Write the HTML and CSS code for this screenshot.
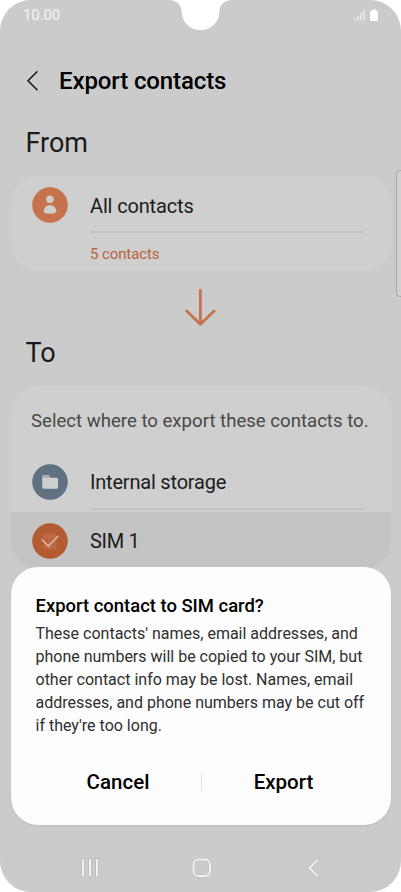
FILE: index.html
```html
<!DOCTYPE html>
<html lang="en">
<head>
<meta charset="utf-8">
<title>Export contacts</title>
<link rel="stylesheet" href="styles.css">
</head>
<body>
<div class="phone">
  <header class="status">
    <span class="time">10.00</span>
    <svg class="signals" width="26" height="14" viewBox="0 0 26 14">
      <path d="M2 10.500v2M5 8v4.500M8 4.500v8M11 2v10.500" stroke="#e9e9e9" stroke-width="1.600" fill="none"/>
      <path d="M19 2.800v-.6q0-.7.7-.7h2.600q.7 0 .7.7v.6h.6q1.400 0 1.400 1.400v7.400q0 1.400-1.400 1.400h-5.200q-1.400 0-1.400-1.400V4.200q0-1.400 1.400-1.400z" fill="#fff"/>
    </svg>
  </header>
  <svg class="notch" width="64" height="31" viewBox="0 0 64 31"><path d="M0 0C8 0 12.500 5 12.700 12a18.800 18.200 0 0 0 37.600 0C50.500 5 55 0 63 0z" fill="#fff"/></svg>
  <div class="titlebar">
    <svg width="12" height="20" viewBox="0 0 12 20"><path d="M11 .8L2 9.800l9 9" stroke="#111" stroke-width="1.500" fill="none" stroke-linecap="round" stroke-linejoin="round"/></svg>
    <h1>Export contacts</h1>
  </div>
  <h2 class="from">From</h2>
  <section class="card source">
    <div class="row">
      <svg class="icon" width="36" height="36" viewBox="0 0 36 36"><circle cx="18" cy="18" r="17.800" fill="#c5734c"/><circle cx="17.900" cy="12.300" r="3.700" fill="#d0cdca"/><path d="M11.700 24.300c0-3.800 2.700-6.100 6.300-6.100s6.300 2.300 6.300 6.100c0 1.700-2.900 2.500-6.300 2.500s-6.300-.8-6.300-2.500z" fill="#d0cdca"/></svg>
      <span class="label all">All contacts</span>
    </div>
    <div class="divider"></div>
    <div class="count"><span>5 contacts</span></div>
  </section>
  <div class="arrow">
    <svg width="32" height="38" viewBox="0 0 32 38"><path d="M16.400 2.300v34M2.700 23L16.400 36.300 30.100 23" stroke="#c5734c" stroke-width="2.800" fill="none" stroke-linecap="round" stroke-linejoin="round"/></svg>
  </div>
  <h2 class="to">To</h2>
  <section class="card target">
    <p class="hint">Select where to export these contacts to.</p>
    <div class="row storage">
      <svg class="icon" width="36" height="36" viewBox="0 0 36 36"><circle cx="18" cy="18" r="17.800" fill="#607182"/><path d="M10.200 15v-2.800q0-1.200 1.200-1.200h4.800q1 0 1.400 1l.5 1.500v3z" fill="#a4adb4"/><path d="M10.200 13.800h14.300q1.500 0 1.500 1.500v8q0 1.500-1.500 1.500H11.700q-1.500 0-1.500-1.500z" fill="#cecfcf"/></svg>
      <span class="label internal">Internal storage</span>
    </div>
    <div class="divider"></div>
    <div class="row chosen">
      <svg class="icon" width="36" height="36" viewBox="0 0 36 36"><circle cx="18" cy="18" r="17.800" fill="#b35b31"/><path d="M13 10.500h8.500l3 3V24q0 2-2 2H13q-2 0-2-2V12.500q0-2 2-2z" fill="#bf6a43"/><path d="M15 16v6M18 16v6M21 16v6" stroke="#b35b31" stroke-width="1"/><path d="M10 16.700l6.400 6.300 9.600-9.700" stroke="#dfc0af" stroke-width="1.300" fill="none" stroke-linecap="round"/></svg>
      <span class="label sim">SIM 1</span>
    </div>
  </section>
  <div class="edge"></div>
  <div class="dialog">
    <h3><span>Export contact to SIM card?</span></h3>
    <p>These contacts' names, email addresses, and<br>phone numbers will be copied to your SIM, but<br>other contact info may be lost. Names, email<br>addresses, and phone numbers may be cut off<br>if they're too long.</p>
    <div class="actions">
      <button class="cancel">Cancel</button>
      <i></i>
      <button class="export">Export</button>
    </div>
  </div>
  <nav class="nav">
    <svg width="20" height="22" viewBox="0 0 20 22"><path d="M3 2.500v16.500M10 2.500v16.500M17 2.500v16.500" stroke="#b5b5b5" stroke-width="3.600" stroke-linecap="round"/><path d="M3 2v17.500M10 2v17.500M17 2v17.500" stroke="#f2f2f2" stroke-width="2.200"/></svg>
    <svg width="22" height="22" viewBox="0 0 22 22" fill="none"><rect x="2.500" y="2.500" width="16.500" height="16.500" rx="5" stroke="#b5b5b5" stroke-width="3"/><rect x="2.500" y="2.500" width="16.500" height="16.500" rx="5" stroke="#f2f2f2" stroke-width="2"/></svg>
    <svg width="14" height="22" viewBox="0 0 14 22" fill="none" stroke-linecap="round"><path d="M11.500 3L3.500 11l8 8" stroke="#b5b5b5" stroke-width="3.200"/><path d="M11.500 3L3.500 11l8 8" stroke="#f2f2f2" stroke-width="2"/></svg>
  </nav>
</div>
</body>
</html>
```

FILE: styles.css
```css
* { box-sizing: border-box; }
body { margin: 0; background: #fff; font-family: Roboto, sans-serif; }
h1, h2, h3, p { margin: 0; font-weight: 400; white-space: nowrap; }
svg { display: block; flex: none; }
.phone {
  position: relative;
  width: 401px;
  height: 892px;
  display: flex;
  flex-direction: column;
  overflow: hidden;
  border-radius: 31px;
  background: #cbcbcb;
}
.status {
  height: 30px;
  padding: 0 22px 0 23px;
  display: flex;
  align-items: center;
  justify-content: space-between;
}
.time { font-size: 15px; line-height: 28px; letter-spacing: -0.1px; color: #f4f4f4; }
.notch { position: absolute; left: 169px; top: 0; }
.titlebar {
  height: 102px;
  padding-left: 26px;
  display: flex;
  align-items: center;
  gap: 21px;
}
h1 { font-size: 24px; font-weight: 500; line-height: 30px; letter-spacing: -0.12px; color: #000; }
h2 { padding: 1px 0 0 25.5px; height: 32px; font-size: 27px; line-height: 32px; color: #1b1b1b; }
.titlebar + .from { margin-top: -6px; }
.card {
  margin: 0 10.5px;
  border-radius: 27px;
  overflow: hidden;
  background: #cfcfcf;
  flex: none;
}
.source { margin-top: 18px; height: 95px; }
.row { padding-left: 21.5px; display: flex; align-items: center; gap: 22px; }
.source .row { height: 55px; padding-top: 3px; }
.label { font-size: 20px; line-height: 26px; color: #1b1b1b; }
.all { padding-top: 2px; letter-spacing: -0.15px; }
.divider { height: 2px; margin: 0 26px 0 79.5px; background: #c3c3c3; }
.count { padding: 1px 0 0 79.5px; font-size: 15px; line-height: 40px; letter-spacing: -0.1px; color: #b9633b; }
.arrow { height: 65px; padding: 17px 0 0 184px; }
.target { margin-top: 18px; height: 183px; }
.hint { height: 49px; padding: 20px 0 0 20.5px; font-size: 18.6px; line-height: 30px; color: #484848; }
.target .row { height: 54px; }
.target .storage { margin-top: 19px; padding-top: 2px; }
.internal { letter-spacing: -0.2px; }
.target .divider { margin-bottom: 2px; }
.target .chosen { height: 60px; padding-bottom: 2px; background: #c4c4c4; }
.sim { letter-spacing: -0.3px; }
.edge {
  position: absolute;
  left: 396px;
  top: 170px;
  width: 12px;
  height: 127px;
  border: 1px solid #a9a9a9;
  border-radius: 4px;
  background: #d0d0d0;
}
.dialog {
  position: absolute;
  left: 10.5px;
  top: 567px;
  width: 380px;
  height: 258px;
  padding: 27px 0 0 25px;
  border-radius: 27px;
  background: #fdfdfd;
  box-shadow: 0 1px 2px #bbb;
}
h3 { font-size: 18.45px; font-weight: 500; line-height: 24px; color: #000; }
.dialog p { margin-top: 4px; font-size: 16px; line-height: 23px; color: #2f2f2f; }
.actions { height: 40px; margin-top: 25px; display: flex; align-items: center; }
.actions i { width: 1px; height: 17px; background: #e1e1e1; }
button {
  padding: 0;
  border: 0;
  background: none;
  font: 500 20.5px/30px Roboto, sans-serif;
  color: #000;
}
.cancel { width: 165px; }
.export { width: 164px; }
.nav {
  height: 48px;
  margin-top: auto;
  padding: 0 80px;
  display: flex;
  align-items: center;
  gap: 91px;
}
.nav svg:last-child { margin-left: 2px; }
```
